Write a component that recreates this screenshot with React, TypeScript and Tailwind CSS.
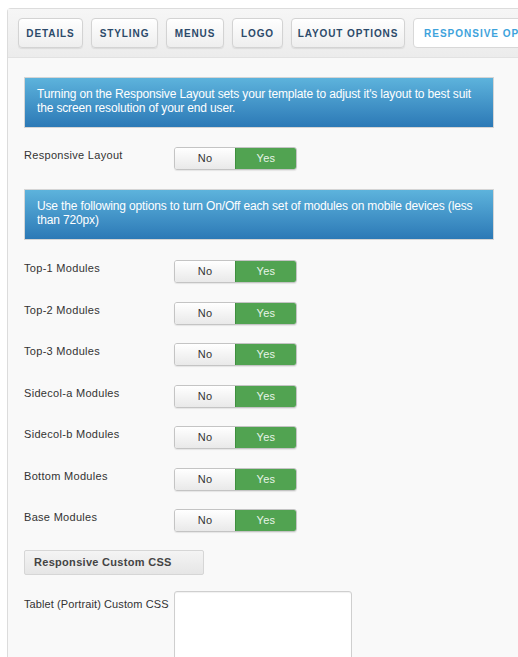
const tabs: [string, string][] = [
  ["Details", "w-[65px]"],
  ["Styling", "w-[67px]"],
  ["Menus", "w-[58px]"],
  ["Logo", "w-[51px]"],
  ["Layout Options", "w-[114px]"],
];

const modules = [
  "Top-1 Modules",
  "Top-2 Modules",
  "Top-3 Modules",
  "Sidecol-a Modules",
  "Sidecol-b Modules",
  "Bottom Modules",
  "Base Modules",
];

function Toggle() {
  return (
    <div className="flex h-[23px] w-[123px] rounded-[3px] border border-[#c4c4c4] shadow-[0_1px_1px_rgba(0,0,0,0.08)] overflow-hidden text-[11px] tracking-[0.3px]">
      <div className="flex-1 flex items-center justify-center bg-gradient-to-b from-white to-[#e9e9e9] text-[#333]">
        No
      </div>
      <div className="flex-1 flex items-center justify-center bg-[#51a351] text-[#e8f4e8] border-l border-[#3f8f3f]">
        Yes
      </div>
    </div>
  );
}

function Row({ label }: { label: string }) {
  return (
    <div className="flex items-start">
      <div className="w-[150px] text-[11px] text-[#333] tracking-[0.3px] whitespace-nowrap">{label}</div>
      <Toggle />
    </div>
  );
}

function Notice({ children }: { children: React.ReactNode }) {
  return (
    <div className="w-[470px] h-[51px] border border-[#d5d5d5] bg-gradient-to-b from-[#5db3dc] to-[#2c79b6] pl-[12px] pr-[8px] pt-[9px] text-[12px] leading-[14px] tracking-[-0.15px] text-white">
      {children}
    </div>
  );
}

export default function App() {
  return (
    <div
      className="w-[518px] h-[657px] overflow-hidden bg-white pl-[7px] pt-[8px]"
      style={{ fontFamily: '"Liberation Sans", Arial, sans-serif' }}
    >
      <div className="h-full border-l border-t border-[#dcdcdc] rounded-tl-[4px] bg-[#f9f9f9]">
        <div className="h-[49px] flex items-start gap-[8px] pl-[10px] pt-[9px] bg-gradient-to-b from-[#f6f6f6] to-[#ececec] border-b border-[#e2e2e2] overflow-hidden">
          {tabs.map(([t, w]) => (
            <div
              key={t}
              className={`${w} shrink-0 h-[30px] flex items-center justify-center rounded-[4px] border border-[#d3d3d3] bg-gradient-to-b from-white to-[#eeeeee] shadow-[0_1px_1px_rgba(0,0,0,0.08)] text-[10px] font-bold uppercase tracking-[0.9px] text-[#2c4a6a] whitespace-nowrap`}
            >
              {t}
            </div>
          ))}
          <div className="shrink-0 h-[30px] pl-[10px] pr-[10px] flex items-center rounded-[4px] border border-[#d8d8d8] bg-white text-[10px] font-bold uppercase tracking-[1px] text-[#3ea3dc] whitespace-nowrap">
            Responsive Options
          </div>
        </div>

        <div className="pl-[16px] pt-[19px]">
          <Notice>
            Turning on the Responsive Layout sets your template to adjust it's layout to best suit the screen resolution of your end user.
          </Notice>

          <div className="mt-[19px]">
            <Row label="Responsive Layout" />
          </div>

          <div className="mt-[19px]">
            <Notice>
              Use the following options to turn On/Off each set of modules on mobile devices (less than 720px)
            </Notice>
          </div>

          <div className="mt-[20px] flex flex-col gap-[18.5px]">
            {modules.map((m) => (
              <Row key={m} label={m} />
            ))}
          </div>

          <div className="mt-[18px] w-[180px] h-[25px] flex items-center pl-[9px] rounded-[2px] border border-[#d6d6d6] bg-gradient-to-b from-[#f4f4f4] to-[#e6e6e6] text-[11px] font-bold text-[#444] tracking-[0.3px]">
            Responsive Custom CSS
          </div>

          <div className="mt-[16px] flex items-start">
            <div className="w-[150px] pt-[5px] text-[11px] text-[#333] tracking-[0.1px] whitespace-nowrap">Tablet (Portrait) Custom CSS</div>
            <div className="w-[178px] h-[80px] rounded-[3px] border border-[#cfcfcf] bg-white shadow-[inset_0_1px_1px_rgba(0,0,0,0.06)]" />
          </div>
        </div>
      </div>
    </div>
  );
}
